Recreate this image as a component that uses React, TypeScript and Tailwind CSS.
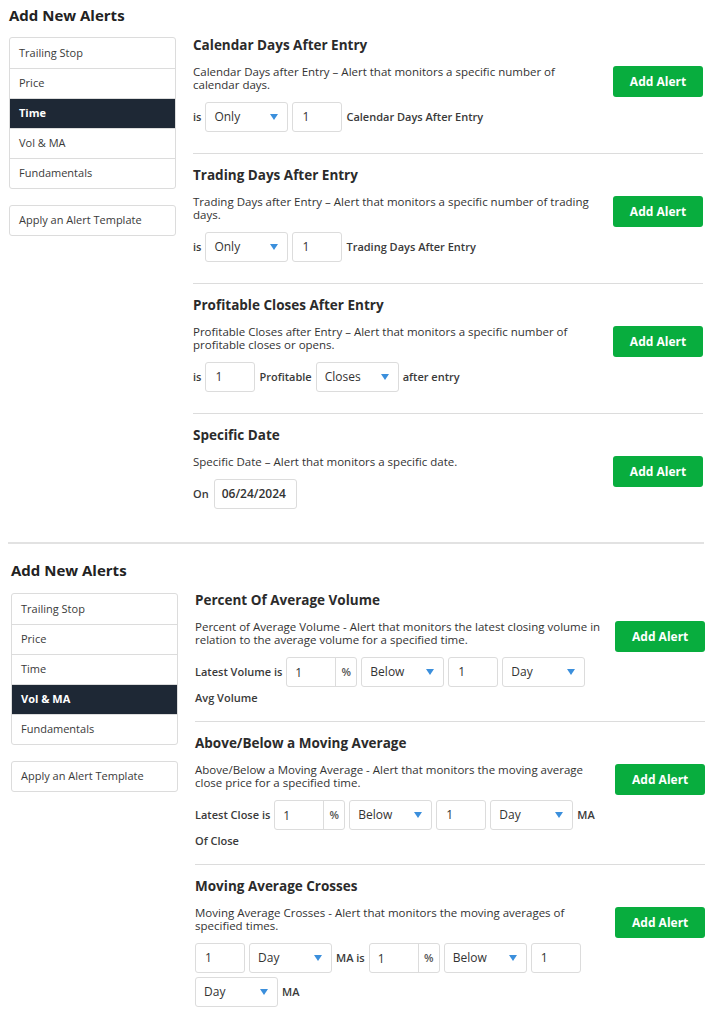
import React from 'react'

type Control =
  | { kind: 'text'; text: string }
  | { kind: 'select'; value: string }
  | { kind: 'input'; value: string }
  | { kind: 'pct'; value: string }
  | { kind: 'date'; value: string }

type AlertSection = {
  title: string;
  // line breaks are kept as written
  description: string;
  controls: Control[];
  wraps?: boolean;
}

const TABS = ['Trailing Stop', 'Price', 'Time', 'Vol & MA', 'Fundamentals']

const timeAlerts: AlertSection[] = [
  {
    title: 'Calendar Days After Entry',
    description: 'Calendar Days after Entry – Alert that monitors a specific number of\ncalendar days.',
    controls: [
      { kind: 'text', text: 'is' },
      { kind: 'select', value: 'Only' },
      { kind: 'input', value: '1' },
      { kind: 'text', text: 'Calendar Days After Entry' },
    ],
  },
  {
    title: 'Trading Days After Entry',
    description: 'Trading Days after Entry – Alert that monitors a specific number of trading\ndays.',
    controls: [
      { kind: 'text', text: 'is' },
      { kind: 'select', value: 'Only' },
      { kind: 'input', value: '1' },
      { kind: 'text', text: 'Trading Days After Entry' },
    ],
  },
  {
    title: 'Profitable Closes After Entry',
    description: 'Profitable Closes after Entry – Alert that monitors a specific number of\nprofitable closes or opens.',
    controls: [
      { kind: 'text', text: 'is' },
      { kind: 'input', value: '1' },
      { kind: 'text', text: 'Profitable' },
      { kind: 'select', value: 'Closes' },
      { kind: 'text', text: 'after entry' },
    ],
  },
  {
    title: 'Specific Date',
    description: 'Specific Date – Alert that monitors a specific date.',
    controls: [
      { kind: 'text', text: 'On' },
      { kind: 'date', value: '06/24/2024' },
    ],
  },
]

const volAlerts: AlertSection[] = [
  {
    title: 'Percent Of Average Volume',
    description: 'Percent of Average Volume - Alert that monitors the latest closing volume in\nrelation to the average volume for a specified time.',
    wraps: true,
    controls: [
      { kind: 'text', text: 'Latest Volume is' },
      { kind: 'pct', value: '1' },
      { kind: 'select', value: 'Below' },
      { kind: 'input', value: '1' },
      { kind: 'select', value: 'Day' },
      { kind: 'text', text: 'Avg Volume' },
    ],
  },
  {
    title: 'Above/Below a Moving Average',
    description: 'Above/Below a Moving Average - Alert that monitors the moving average\nclose price for a specified time.',
    wraps: true,
    controls: [
      { kind: 'text', text: 'Latest Close is' },
      { kind: 'pct', value: '1' },
      { kind: 'select', value: 'Below' },
      { kind: 'input', value: '1' },
      { kind: 'select', value: 'Day' },
      { kind: 'text', text: 'MA' },
      { kind: 'text', text: 'Of Close' },
    ],
  },
  {
    title: 'Moving Average Crosses',
    description: 'Moving Average Crosses - Alert that monitors the moving averages of\nspecified times.',
    wraps: true,
    controls: [
      { kind: 'input', value: '1' },
      { kind: 'select', value: 'Day' },
      { kind: 'text', text: 'MA is' },
      { kind: 'pct', value: '1' },
      { kind: 'select', value: 'Below' },
      { kind: 'input', value: '1' },
      { kind: 'select', value: 'Day' },
      { kind: 'text', text: 'MA' },
    ],
  },
]

const Caret = () => (
  <svg width="8" height="6" viewBox="0 0 8 6">
    <path d="M0 0h8L4 6z" fill="#3b8fdc" />
  </svg>
)

const ControlItem = ({ c }: { c: Control }) => {
  if (c.kind === 'text') {
    return <span className="text-[11px] leading-[14px] font-semibold text-[#3a3a3a]">{c.text}</span>
  }
  if (c.kind === 'select') {
    return (
      <div className="flex h-[30px] w-[83px] items-center justify-between rounded-[3px] border border-[#dcdcdc] pl-[8px] pr-[9px] text-[12px] text-[#333]">
        <span>{c.value}</span>
        <Caret />
      </div>
    )
  }
  if (c.kind === 'pct') {
    return (
      <div className="flex h-[30px] w-[71px] rounded-[3px] border border-[#dcdcdc] text-[12px] text-[#333]">
        <span className="flex flex-1 items-center pl-[8px] pt-[2px]">{c.value}</span>
        <span className="flex w-[21px] items-center justify-center border-l border-[#dcdcdc] text-[11px] font-semibold text-[#555]">%</span>
      </div>
    )
  }
  if (c.kind === 'date') {
    return (
      <div className="ml-[1px] flex h-[30px] w-[83px] items-center rounded-[3px] border border-[#dcdcdc] pl-[7px] text-[12px] font-semibold text-[#333]">
        {c.value}
      </div>
    )
  }
  return (
    <div className="flex h-[30px] w-[50px] items-center rounded-[3px] border border-[#dcdcdc] pl-[9px] text-[12px] text-[#333]">
      {c.value}
    </div>
  )
}

const Section = ({ s, last }: { s: AlertSection; last: boolean }) => {
  const bottom = last ? 'pb-0' : s.wraps ? 'pb-[16px] border-b border-[#dcdcdc]' : 'pb-[21px] border-b border-[#dcdcdc]'
  return (
    <div className={`pt-[12px] first:pt-0 ${bottom}`}>
      <h3 className="text-[13.5px] leading-[18px] font-bold text-[#2b2b2b]">{s.title}</h3>
      <div className="mt-[11px] flex items-start">
        <div className="min-w-0 flex-1">
          <p className="whitespace-pre text-[11.5px] leading-[13px] text-[#333]">{s.description}</p>
          <div className="mt-[11px] flex flex-wrap items-center gap-[4px]">
            {s.controls.map((c, i) => (
              <ControlItem key={i} c={c} />
            ))}
          </div>
        </div>
        <button className="ml-[15px] mt-[1px] h-[31px] w-[90px] shrink-0 rounded-[3px] bg-[#08ad3e] text-[12px] font-bold text-white">
          Add Alert
        </button>
      </div>
    </div>
  )
}

const AlertPanel = ({ active, sections, offset }: { active: string; sections: AlertSection[]; offset: 'a' | 'b' }) => (
  <div className={offset === 'a' ? 'pl-[9px] pr-[24px]' : 'pl-[11px] pr-[22px]'}>
    <h2 className="text-[15px] leading-[20px] font-bold text-[#222]">Add New Alerts</h2>
    <div className="mt-[11px] flex items-start">
      <aside className={`w-[167px] shrink-0 ${offset === 'a' ? 'mt-[1px]' : 'mt-[2px]'}`}>
        <div className="overflow-hidden rounded-[3px] border border-[#dcdcdc]">
          {TABS.map((t, i) => (
            <div
              key={t}
              className={`flex h-[30px] items-center pl-[9px] text-[11px] ${i > 0 ? 'border-t border-[#dcdcdc]' : ''} ${
                t === active ? 'bg-[#1e2835] font-bold text-white' : 'text-[#3a3a3a]'
              }`}
            >
              {t}
            </div>
          ))}
        </div>
        <div className="mt-[16px] flex h-[31px] items-center rounded-[3px] border border-[#dcdcdc] pl-[9px] text-[11px] text-[#3a3a3a]">
          Apply an Alert Template
        </div>
      </aside>
      <div className="ml-[17px] flex-1">
        {sections.map((s, i) => (
          <Section key={s.title} s={s} last={i === sections.length - 1} />
        ))}
      </div>
    </div>
  </div>
)

export default function App() {
  return (
    <div className="min-h-screen w-[727px] bg-white pt-[5px] font-['Open_Sans',sans-serif]">
      <AlertPanel active="Time" sections={timeAlerts} offset="a" />
      <div className="mx-[8px] mt-[33px] h-[2px] w-[696px] bg-[#e2e2e2]" />
      <div className="mt-[16px]">
        <AlertPanel active="Vol & MA" sections={volAlerts} offset="b" />
      </div>
    </div>
  )
}
